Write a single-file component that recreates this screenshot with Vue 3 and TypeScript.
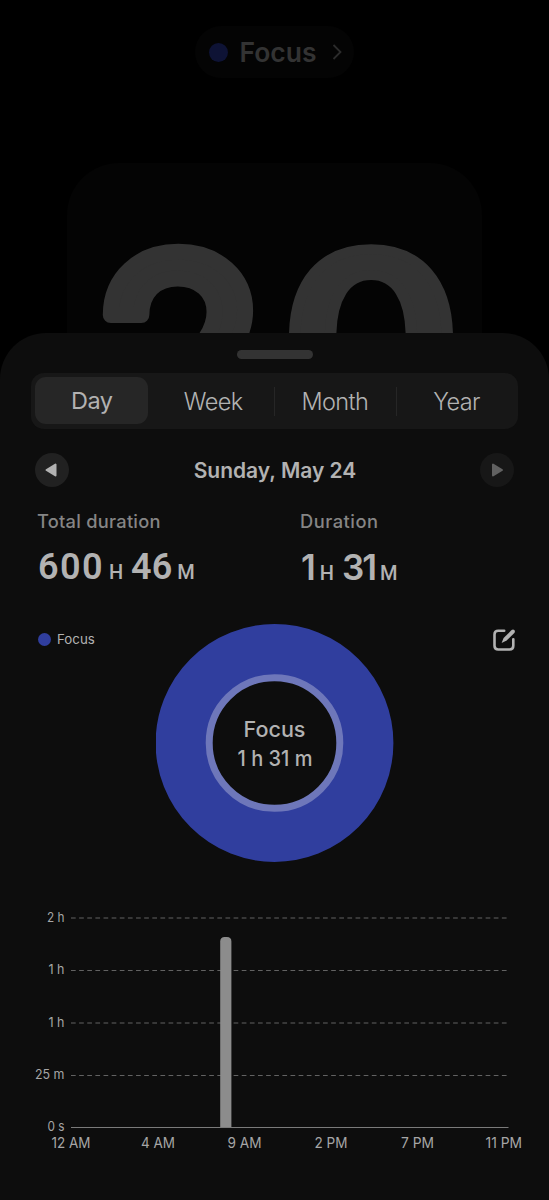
<script setup lang="ts">
import { ref } from 'vue'

interface AxisLabel { text: string; x: number; width: number }
interface GridLine { text: string; y: number; width: number }

const periods = ['Day', 'Week', 'Month', 'Year']
const active = ref('Day')

const gridLines: GridLine[] = [
  { text: '2 h', y: 17.5, width: 17.5 },
  { text: '1 h', y: 70, width: 16 },
  { text: '1 h', y: 122.5, width: 16 },
  { text: '25 m', y: 175, width: 29.5 },
]

const hours: AxisLabel[] = [
  { text: '12 AM', x: 71, width: 39 },
  { text: '4 AM', x: 158, width: 34 },
  { text: '9 AM', x: 244.5, width: 34 },
  { text: '2 PM', x: 331, width: 33 },
  { text: '7 PM', x: 417.5, width: 33 },
  { text: '11 PM', x: 503.8, width: 36.5 },
]
</script>

<template>
  <div class="screen">
    <header class="top">
      <div class="pill">
        <i class="pill-dot"></i>
        <span class="pill-text">Focus</span>
        <svg class="chevron" width="10" height="18" viewBox="0 0 10 18">
          <path d="M1.5 2 L8.5 9 L1.5 16" />
        </svg>
      </div>
    </header>

    <div class="clock">
      <svg width="415" height="300" viewBox="0 0 415 300">
        <text class="tens" x="24" y="299" textLength="176" lengthAdjust="spacingAndGlyphs">2</text>
        <text class="ones" x="214" y="261" textLength="180" lengthAdjust="spacingAndGlyphs">0</text>
      </svg>
    </div>

    <main class="sheet">
      <div class="handle"></div>

      <nav class="segments">
        <button
          v-for="p in periods"
          :key="p"
          class="segment"
          :class="{ active: p === active }"
          @click="active = p"
        ><span>{{ p }}</span></button>
      </nav>

      <div class="date-row">
        <button class="round" aria-label="Previous day">
          <svg width="34" height="34" viewBox="0 0 34 34">
            <path class="arrow" d="M11.5 17 L20.5 11.5 V22.5 Z" />
          </svg>
        </button>
        <span class="date">Sunday, May 24</span>
        <button class="round dim" aria-label="Next day">
          <svg width="34" height="34" viewBox="0 0 34 34">
            <path class="arrow" d="M22 17 L13 11.5 V22.5 Z" />
          </svg>
        </button>
      </div>

      <section class="stats">
        <div class="stat">
          <div class="stat-label">Total duration</div>
          <div class="stat-value"><b>600</b><small>H</small><b class="minutes">46</b><small>M</small></div>
        </div>
        <div class="stat">
          <div class="stat-label second">Duration</div>
          <div class="stat-value"><b class="single">1</b><small>H</small><b class="narrow">31</b><small>M</small></div>
        </div>
      </section>

      <section class="breakdown">
        <div class="legend"><i></i><span>Focus</span></div>
        <svg class="donut" width="238" height="238" viewBox="0 0 238 238">
          <circle cx="118.5" cy="119" r="92.9" stroke="#303e9e" stroke-width="52" />
          <circle cx="118.5" cy="119" r="65.3" stroke="#6e77ba" stroke-width="7" />
          <text x="118.5" y="112.5" textLength="62" lengthAdjust="spacingAndGlyphs">Focus</text>
          <text x="119" y="142" textLength="75" lengthAdjust="spacingAndGlyphs">1 h 31 m</text>
        </svg>
        <svg class="edit" width="24" height="24" viewBox="0 0 24 24">
          <path class="frame" d="M12.2 2.7 H6.2 Q2.5 2.7 2.5 6.4 V17.8 Q2.5 21.5 6.2 21.5 H17.6 Q21.3 21.5 21.3 17.8 V11.3" />
          <path class="pen" d="M19.6 2.1 Q21 0.9 22.3 2.1 Q23.5 3.5 22.3 4.9 L14.6 12.6 L9.6 15 L11.6 10 Z" />
        </svg>
      </section>

      <svg class="chart" width="549" height="270" viewBox="0 0 549 270">
        <g v-for="(line, i) in gridLines" :key="i">
          <line class="grid" x1="71" x2="508" :y1="line.y + 0.5" :y2="line.y + 0.5" />
          <text class="y" x="64.5" :y="line.y + 4.3" :textLength="line.width" lengthAdjust="spacingAndGlyphs">{{ line.text }}</text>
        </g>
        <path class="bar" d="M220.2 228 V41.5 Q220.2 37 224.7 37 H227 Q231.4 37 231.4 41.5 V228 Z" />
        <line class="base" x1="71" x2="508.5" y1="227.5" y2="227.5" />
        <text class="y" x="64.5" y="231.3" textLength="17" lengthAdjust="spacingAndGlyphs">0 s</text>
        <text
          v-for="h in hours"
          :key="h.text"
          class="x"
          :x="h.x"
          y="248"
          :textLength="h.width"
          lengthAdjust="spacingAndGlyphs"
        >{{ h.text }}</text>
      </svg>
    </main>
  </div>
</template>

<style>
html,
body {
  margin: 0;
  background: #000;
}
</style>

<style scoped>
.screen {
  width: 549px;
  height: 1200px;
  overflow: hidden;
  background: #000;
  color: #b2b2b2;
  font-family: Inter, "Liberation Sans", sans-serif;
  display: flex;
  flex-direction: column;
}
.top {
  height: 137px;
  padding-top: 26px;
  flex: none;
  display: flex;
  justify-content: center;
  align-items: flex-start;
}
.pill {
  width: 159px;
  height: 52px;
  border-radius: 26px;
  background: #040404;
  display: flex;
  align-items: center;
  box-sizing: border-box;
  padding-left: 14px;
}
.pill-dot {
  width: 19px;
  height: 19px;
  border-radius: 50%;
  background: #0e1335;
}
.pill-text {
  margin-left: 11.5px;
  width: 92px;
  font-size: 26.5px;
  font-weight: 600;
  line-height: 52px;
  color: #333;
}
.chevron path {
  fill: none;
  stroke: #2c2c2c;
  stroke-width: 1.8;
}
.clock {
  flex: none;
  width: 415px;
  height: 170px;
  margin: 0 auto;
  overflow: hidden;
  border-radius: 52px 52px 0 0;
  background: #040404;
}
.clock text {
  fill: #333;
  stroke: #333;
  stroke-linejoin: round;
}
.tens {
  font-size: 285px;
  font-weight: 500;
  stroke-width: 16;
}
.ones {
  font-size: 237px;
  font-weight: 600;
  stroke-width: 10;
}
.sheet {
  flex: 1;
  background: #0d0d0d;
  border-radius: 46px 46px 0 0;
  display: flex;
  flex-direction: column;
}
.handle {
  width: 76px;
  height: 9px;
  margin: 17px auto 0;
  border-radius: 5px;
  background: #333;
}
.segments {
  display: grid;
  grid-template-columns: repeat(4, 1fr);
  width: 487px;
  height: 56px;
  margin: 14px 0 0 31px;
  border-radius: 13px;
  background: #171717;
}
button {
  border: 0;
  padding: 0;
  background: none;
  color: inherit;
  font-family: inherit;
}
.segment {
  display: flex;
  align-items: center;
  justify-content: center;
  font-size: 23.5px;
  letter-spacing: -0.6px;
  font-weight: 350;
  margin: 0 0.5px 0 -0.5px;
}
.segment:nth-child(n + 3) {
  background: linear-gradient(#262626, #262626) left center / 1px 29px no-repeat;
}
.segment.active {
  margin: 4px 4.5px 5px 4px;
  border-radius: 11px;
  background: #262626;
  font-weight: 400;
}
.date-row {
  display: flex;
  align-items: center;
  justify-content: space-between;
  height: 34px;
  padding: 0 35px;
  margin-top: 24px;
}
.round {
  width: 34px;
  height: 34px;
  border-radius: 50%;
  background: #212121;
}
.round svg {
  display: block;
}
.arrow {
  fill: #b2b2b2;
  stroke: #b2b2b2;
  stroke-width: 2;
  stroke-linejoin: round;
}
.dim {
  background: #171717;
}
.dim .arrow {
  fill: #616161;
  stroke: #616161;
}
.date {
  font-size: 21px;
  font-weight: 600;
  padding-left: 1px;
}
.stats {
  display: grid;
  grid-template-columns: 263px 1fr;
  padding-left: 37px;
  margin-top: 22px;
  height: 80px;
}
.stat-label {
  font-size: 18.3px;
  font-weight: 500;
  line-height: 24px;
  letter-spacing: 0.25px;
  color: #858585;
}
.second {
  letter-spacing: 0.5px;
}
.stat-value {
  display: flex;
  align-items: baseline;
  margin-top: 10px;
  padding-left: 1px;
  height: 48px;
  line-height: 48px;
  font-family: Roboto, sans-serif;
}
.stat-value b {
  font-size: 36px;
  font-weight: 600;
  letter-spacing: 1.4px;
}
.stat-value .minutes {
  letter-spacing: 0;
}
.stat-value .single,
.stat-value .narrow {
  font-family: Inter, sans-serif;
  font-size: 35px;
}
.stat-value .single {
  letter-spacing: -1px;
}
.stat-value .narrow {
  letter-spacing: -2px;
}
.stat-value small {
  font-size: 20px;
  font-weight: 500;
  margin: 0 8px 0 5px;
}
.breakdown {
  display: grid;
  grid-template-columns: 118px 238px 1fr;
  align-items: start;
  margin-top: 35px;
  padding-left: 38px;
  height: 238px;
}
.legend {
  display: flex;
  align-items: center;
  gap: 6px;
  margin-top: 5px;
  height: 20px;
  font-size: 13.3px;
}
.legend i {
  width: 13px;
  height: 13px;
  border-radius: 50%;
  background: #303e9e;
}
.donut circle {
  fill: none;
}
.donut text {
  font-size: 21px;
  font-weight: 500;
  fill: #b2b2b2;
  text-anchor: middle;
}
.edit {
  margin: 4px 0 0 98px;
}
.frame {
  fill: none;
  stroke: #b2b2b2;
  stroke-width: 2.6;
  stroke-linecap: round;
}
.pen {
  fill: #b2b2b2;
}
.chart {
  display: block;
  margin-top: 38px;
  flex: none;
}
.chart text {
  fill: #a6a6a6;
  font-weight: 400;
}
.y {
  font-size: 13px;
  text-anchor: end;
}
.x {
  font-size: 14.2px;
  text-anchor: middle;
}
.grid {
  stroke: #626262;
  stroke-dasharray: 4.7 3.43;
}
.base {
  stroke: #7a7a7a;
}
.bar {
  fill: #8c8c8c;
}
</style>
